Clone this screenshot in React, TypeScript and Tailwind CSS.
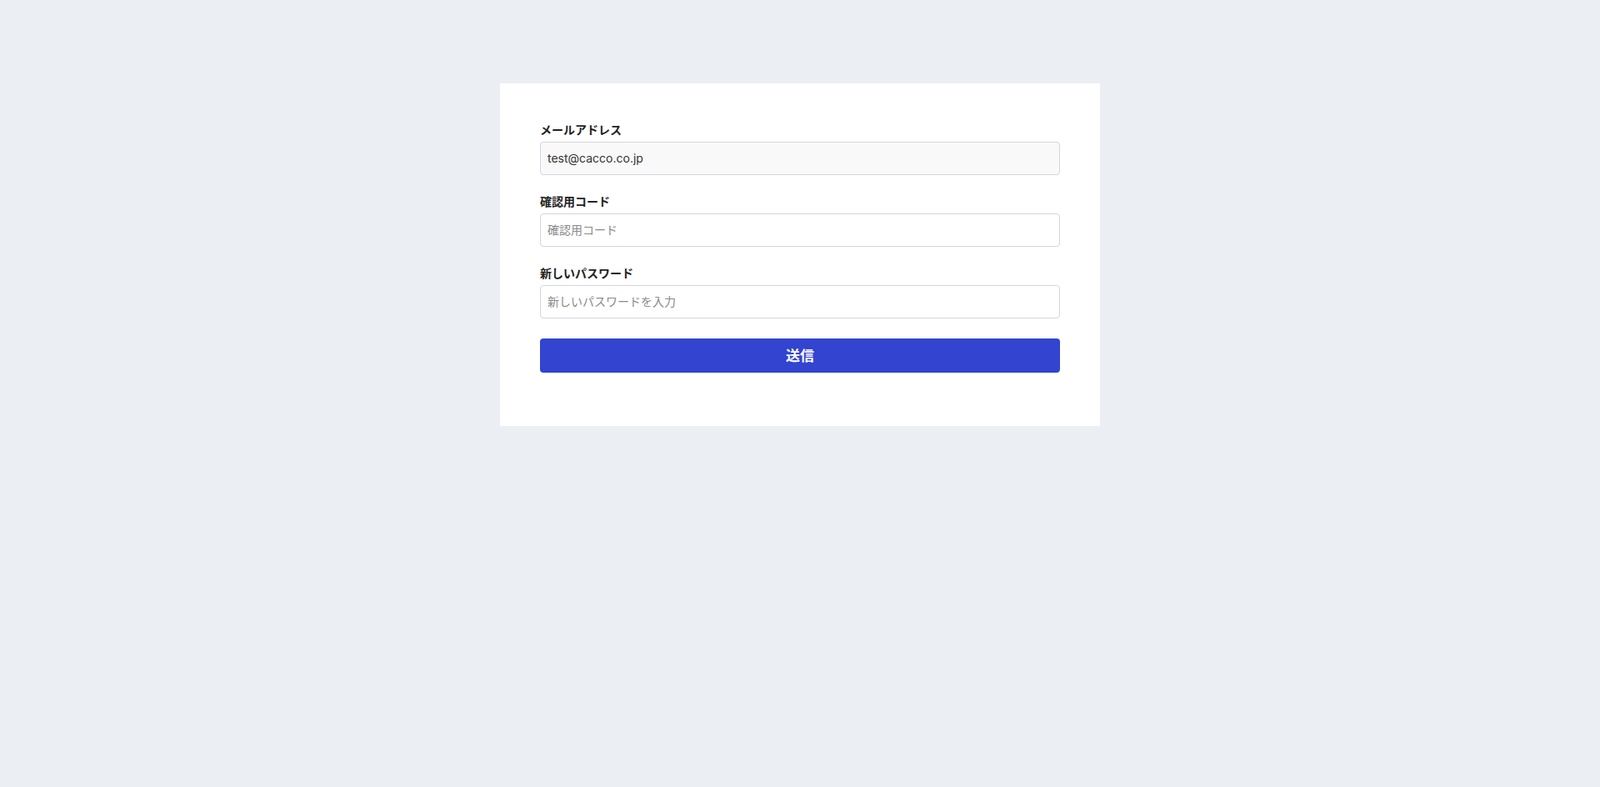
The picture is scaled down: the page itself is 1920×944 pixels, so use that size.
import { useState } from 'react';

const FONT = { fontFamily: '"Noto Sans CJK JP", "Noto Sans", sans-serif' };
const LATIN = { fontFamily: 'Inter, "Noto Sans CJK JP", sans-serif' };

export default function App() {
  const [code, setCode] = useState('');
  const [password, setPassword] = useState('');

  return (
    <div className="min-h-screen bg-[#ebeef3] pt-[100px]" style={FONT}>
      <div className="mx-auto w-[720px] bg-white px-12 pt-[46px] pb-16">
        {/* メールアドレス */}
        <div className="mb-[22px]">
          <label className="mb-1.5 block text-sm leading-[18px] font-bold text-[#222]">メールアドレス</label>
          <input
            type="text"
            value="test@cacco.co.jp"
            readOnly
            style={LATIN}
            className="block h-10 w-full rounded border border-[#d3d5df] bg-[#f9f9f9] px-2 pb-0.5 text-sm text-[#333] outline-none"
          />
        </div>

        {/* 確認用コード */}
        <div className="mb-[22px]">
          <label className="mb-1.5 block text-sm leading-[18px] font-bold text-[#222]">確認用コード</label>
          <input
            type="text"
            value={code}
            onChange={(e) => setCode(e.target.value)}
            placeholder="確認用コード"
            className="block h-10 w-full rounded border border-[#d3d5df] bg-white px-2 pb-0.5 text-sm text-[#333] placeholder-[#8a8a8a] outline-none"
          />
        </div>

        {/* 新しいパスワード */}
        <div className="mb-6">
          <label className="mb-1.5 block text-sm leading-[18px] font-bold text-[#222]">新しいパスワード</label>
          <input
            type="password"
            value={password}
            onChange={(e) => setPassword(e.target.value)}
            placeholder="新しいパスワードを入力"
            className="block h-10 w-full rounded border border-[#d3d5df] bg-white px-2 pb-0.5 text-sm text-[#333] placeholder-[#8a8a8a] outline-none"
          />
        </div>

        <button className="block h-[41px] w-full rounded bg-[#3244d0] pb-0.5 text-[17px] font-bold text-white">
          送信
        </button>
      </div>
    </div>
  );
}
